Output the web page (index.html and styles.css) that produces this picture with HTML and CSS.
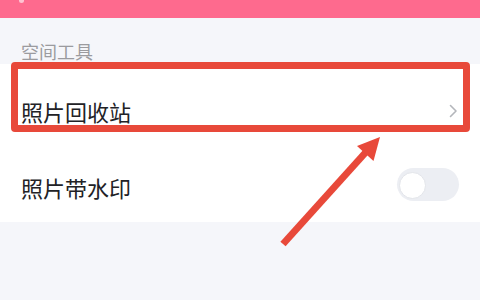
FILE: index.html
```html
<!DOCTYPE html>
<html lang="zh">
<head>
<meta charset="utf-8">
<link rel="stylesheet" href="styles.css">
</head>
<body>
<div class="page">
  <header class="topbar"><span class="back-hint"></span></header>
  <div class="section-title">空间工具</div>
  <div class="list">
    <div class="row row-first">
      <span class="label">照片回收站</span>
      <svg class="chevron" width="9" height="14" viewBox="0 0 9 14"><path d="M1.5 1.5 L7 7 L1.5 12.5" fill="none" stroke="#b4b6bb" stroke-width="1.6" stroke-linecap="round" stroke-linejoin="round"/></svg>
    </div>
    <div class="row row-second">
      <span class="label label-low">照片带水印</span>
      <span class="toggle"><span class="knob"></span></span>
    </div>
  </div>
  <div class="highlight"></div>
  <svg class="arrow" width="480" height="300" viewBox="0 0 480 300">
    <line x1="283" y1="244" x2="366" y2="152" stroke="#e8493a" stroke-width="7"/>
    <polygon points="380,137 357,146 373.5,161" fill="#e8493a"/>
  </svg>
</div>
</body>
</html>
```
FILE: styles.css
```css
html, body {
  margin: 0;
  padding: 0;
}
body {
  background: #f5f6fa;
  font-family: "Noto Sans CJK SC", "Noto Sans", sans-serif;
  width: 480px;
  height: 300px;
  overflow: hidden;
}
.page {
  position: relative;
  width: 480px;
  height: 300px;
}
.topbar {
  height: 18px;
  background: #fe6a8e;
  position: relative;
}
.back-hint {
  position: absolute;
  left: 19px;
  top: 0;
  width: 5px;
  height: 3px;
  border-radius: 0 0 3px 3px;
  background: rgba(255, 255, 255, 0.6);
}
.section-title {
  height: 46px;
  box-sizing: border-box;
  padding: 22px 0 0 21px;
  font-size: 18px;
  line-height: 22px;
  color: #9b9b9f;
}
.list {
  background: #ffffff;
}
.row {
  display: flex;
  align-items: center;
  justify-content: space-between;
  box-sizing: border-box;
  padding-left: 21px;
  padding-right: 22px;
}
.row-first {
  height: 78px;
  padding-top: 16px;
}
.row-second {
  height: 80px;
  padding-top: 0;
  padding-right: 21px;
}
.label {
  font-size: 22px;
  line-height: 30px;
  color: #222226;
}
.label-low {
  margin-top: 10px;
}
.chevron {
  display: block;
}
.toggle {
  width: 62px;
  height: 33px;
  border-radius: 17px;
  background: #eceef3;
  display: flex;
  align-items: center;
  padding-left: 2px;
  box-sizing: border-box;
  margin-top: 4px;
}
.knob {
  width: 25px;
  height: 25px;
  border-radius: 50%;
  background: #ffffff;
  border: 1px solid #e3e5ea;
  margin-top: 2px;
}
.highlight {
  position: absolute;
  left: 11px;
  top: 62px;
  width: 459px;
  height: 70px;
  box-sizing: border-box;
  border: 7px solid #e8493a;
  border-radius: 4px;
}
.arrow {
  position: absolute;
  left: 0;
  top: 0;
}
```
